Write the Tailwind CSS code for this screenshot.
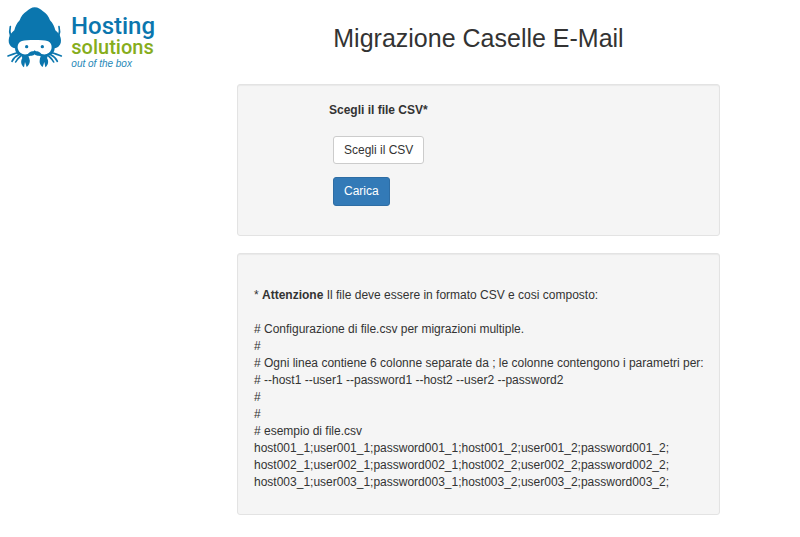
<!DOCTYPE html>
<html lang="it">
<head>
  <meta charset="UTF-8" />
  <meta name="viewport" content="width=device-width, initial-scale=1.0"/>
  <title>Migrazione Caselle E-Mail</title>
  <script src="https://cdn.jsdelivr.net/npm/@tailwindcss/browser@4"></script>
</head>
<body class="bg-white font-['Liberation_Sans',Arial,sans-serif] text-[12px] leading-[17px] text-[#333]">

<div class="grid grid-cols-[237fr_483fr_80fr]">

  <!-- Logo -->
  <header>
    <svg class="block w-[170px] h-[80px]" viewBox="0 0 510 240" role="img" aria-label="Hosting Solutions">
      <!-- Shell and head -->
      <path fill="#0b76ae" d="M104 22C95 22 87 27 80 34C70 40 63 50 59 61C50 70 46 80 43 91C35 98 29 105 27 114C25 123 26 132 32 138C36 142 40 144 45 145C45 154 50 163 58 166L82 172L104 160L126 172L150 166C158 163 164 154 164 145C169 144 173 142 177 138C183 132 184 123 182 114C180 105 174 98 166 91C163 80 159 70 150 61C146 50 139 40 129 34C122 27 114 22 104 22Z"/>
      <!-- Claws -->
      <g fill="#0b76ae">
        <path d="M60 160C72 163 84 166 88 174C92 184 88 196 80 201L75 186L72 202C63 195 61 184 67 174Z"/>
        <path d="M148 160C136 163 124 166 120 174C116 184 120 196 128 201L133 186L136 202C145 195 147 184 141 174Z"/>
      </g>
      <!-- Face -->
      <path fill="#fff" d="M66 123C55 127 51 137 54 148C58 160 70 166 83 162C93 160 98 156 104 151C110 156 115 160 125 162C138 166 150 160 154 148C157 137 153 127 142 123C128 119 80 119 66 123Z"/>
      <path fill="#fff" d="M88 170C94 171 99 168 104 163C109 168 114 171 120 170L115 202H93Z"/>
      <g fill="#0b76ae">
        <circle cx="80" cy="140" r="5"/>
        <circle cx="127" cy="140" r="5"/>
        <path d="M84 162C91 153 98 151 104 157C110 151 117 153 124 162C117 169 109 169 104 163C99 169 91 169 84 162Z"/>
      </g>
      <!-- Legs -->
      <g fill="none" stroke="#0b76ae" stroke-width="5" stroke-linecap="round">
        <path d="M32 108C28 98 29 88 31 80M176 108C180 98 179 88 177 80"/>
        <path d="M52 158C41 162 31 165 24 168M56 164C45 169 39 177 36 184M62 168C55 174 50 180 47 186"/>
        <path d="M156 158C167 162 177 165 184 168M152 164C163 169 169 177 172 184M146 168C153 174 158 180 161 186"/>
      </g>
      <text x="213" y="103" fill="#0b76ae" font-family="Roboto, sans-serif" font-weight="500" font-size="72">Hosting</text>
      <text x="214" y="163" fill="#86ad1c" font-family="Roboto, sans-serif" font-weight="500" font-size="60">solutions</text>
      <text x="214" y="201" fill="#2587b7" font-family="'Liberation Sans', Arial, sans-serif" font-style="italic" font-size="30">out of the box</text>
    </svg>
  </header>

  <main>
    <h1 class="pt-6 pb-8 text-center text-[25px] leading-7">Migrazione Caselle E-Mail</h1>

    <!-- Upload form -->
    <form class="flex flex-col items-start mb-[17px] pt-[17px] pb-[29px] pl-[91px] rounded-[3px] border border-[#e3e3e3] bg-[#f5f5f5] shadow-[inset_0_1px_1px_rgba(0,0,0,0.05)]">
      <label for="csvButton" class="font-bold">Scegli il file CSV*</label>
      <button type="button" id="csvButton" class="mt-[17px] ml-1 h-7 px-[10px] rounded-[3px] border border-[#ccc] bg-white">Scegli il CSV</button>
      <button type="submit" class="mt-[13px] ml-1 h-[29px] px-[10px] rounded-[3px] border border-[#2e6da4] bg-[#337ab7] text-white">Carica</button>
    </form>

    <!-- CSV format notes -->
    <section class="pt-[33px] pb-[23px] pl-4 pr-2 rounded-[3px] border border-[#e3e3e3] bg-[#f5f5f5] shadow-[inset_0_1px_1px_rgba(0,0,0,0.05)]">
      <p>* <strong>Attenzione</strong> Il file deve essere in formato CSV e cosi composto:</p>
      <p class="mt-[17px]">
        # Configurazione di file.csv per migrazioni multiple.<br>
        #<br>
        # Ogni linea contiene 6 colonne separate da ; le colonne contengono i parametri per:<br>
        # --host1 --user1 --password1 --host2 --user2 --password2<br>
        #<br>
        #<br>
        # esempio di file.csv<br>
        host001_1;user001_1;password001_1;host001_2;user001_2;password001_2;<br>
        host002_1;user002_1;password002_1;host002_2;user002_2;password002_2;<br>
        host003_1;user003_1;password003_1;host003_2;user003_2;password003_2;
      </p>
    </section>
  </main>

</div>

</body>
</html>
